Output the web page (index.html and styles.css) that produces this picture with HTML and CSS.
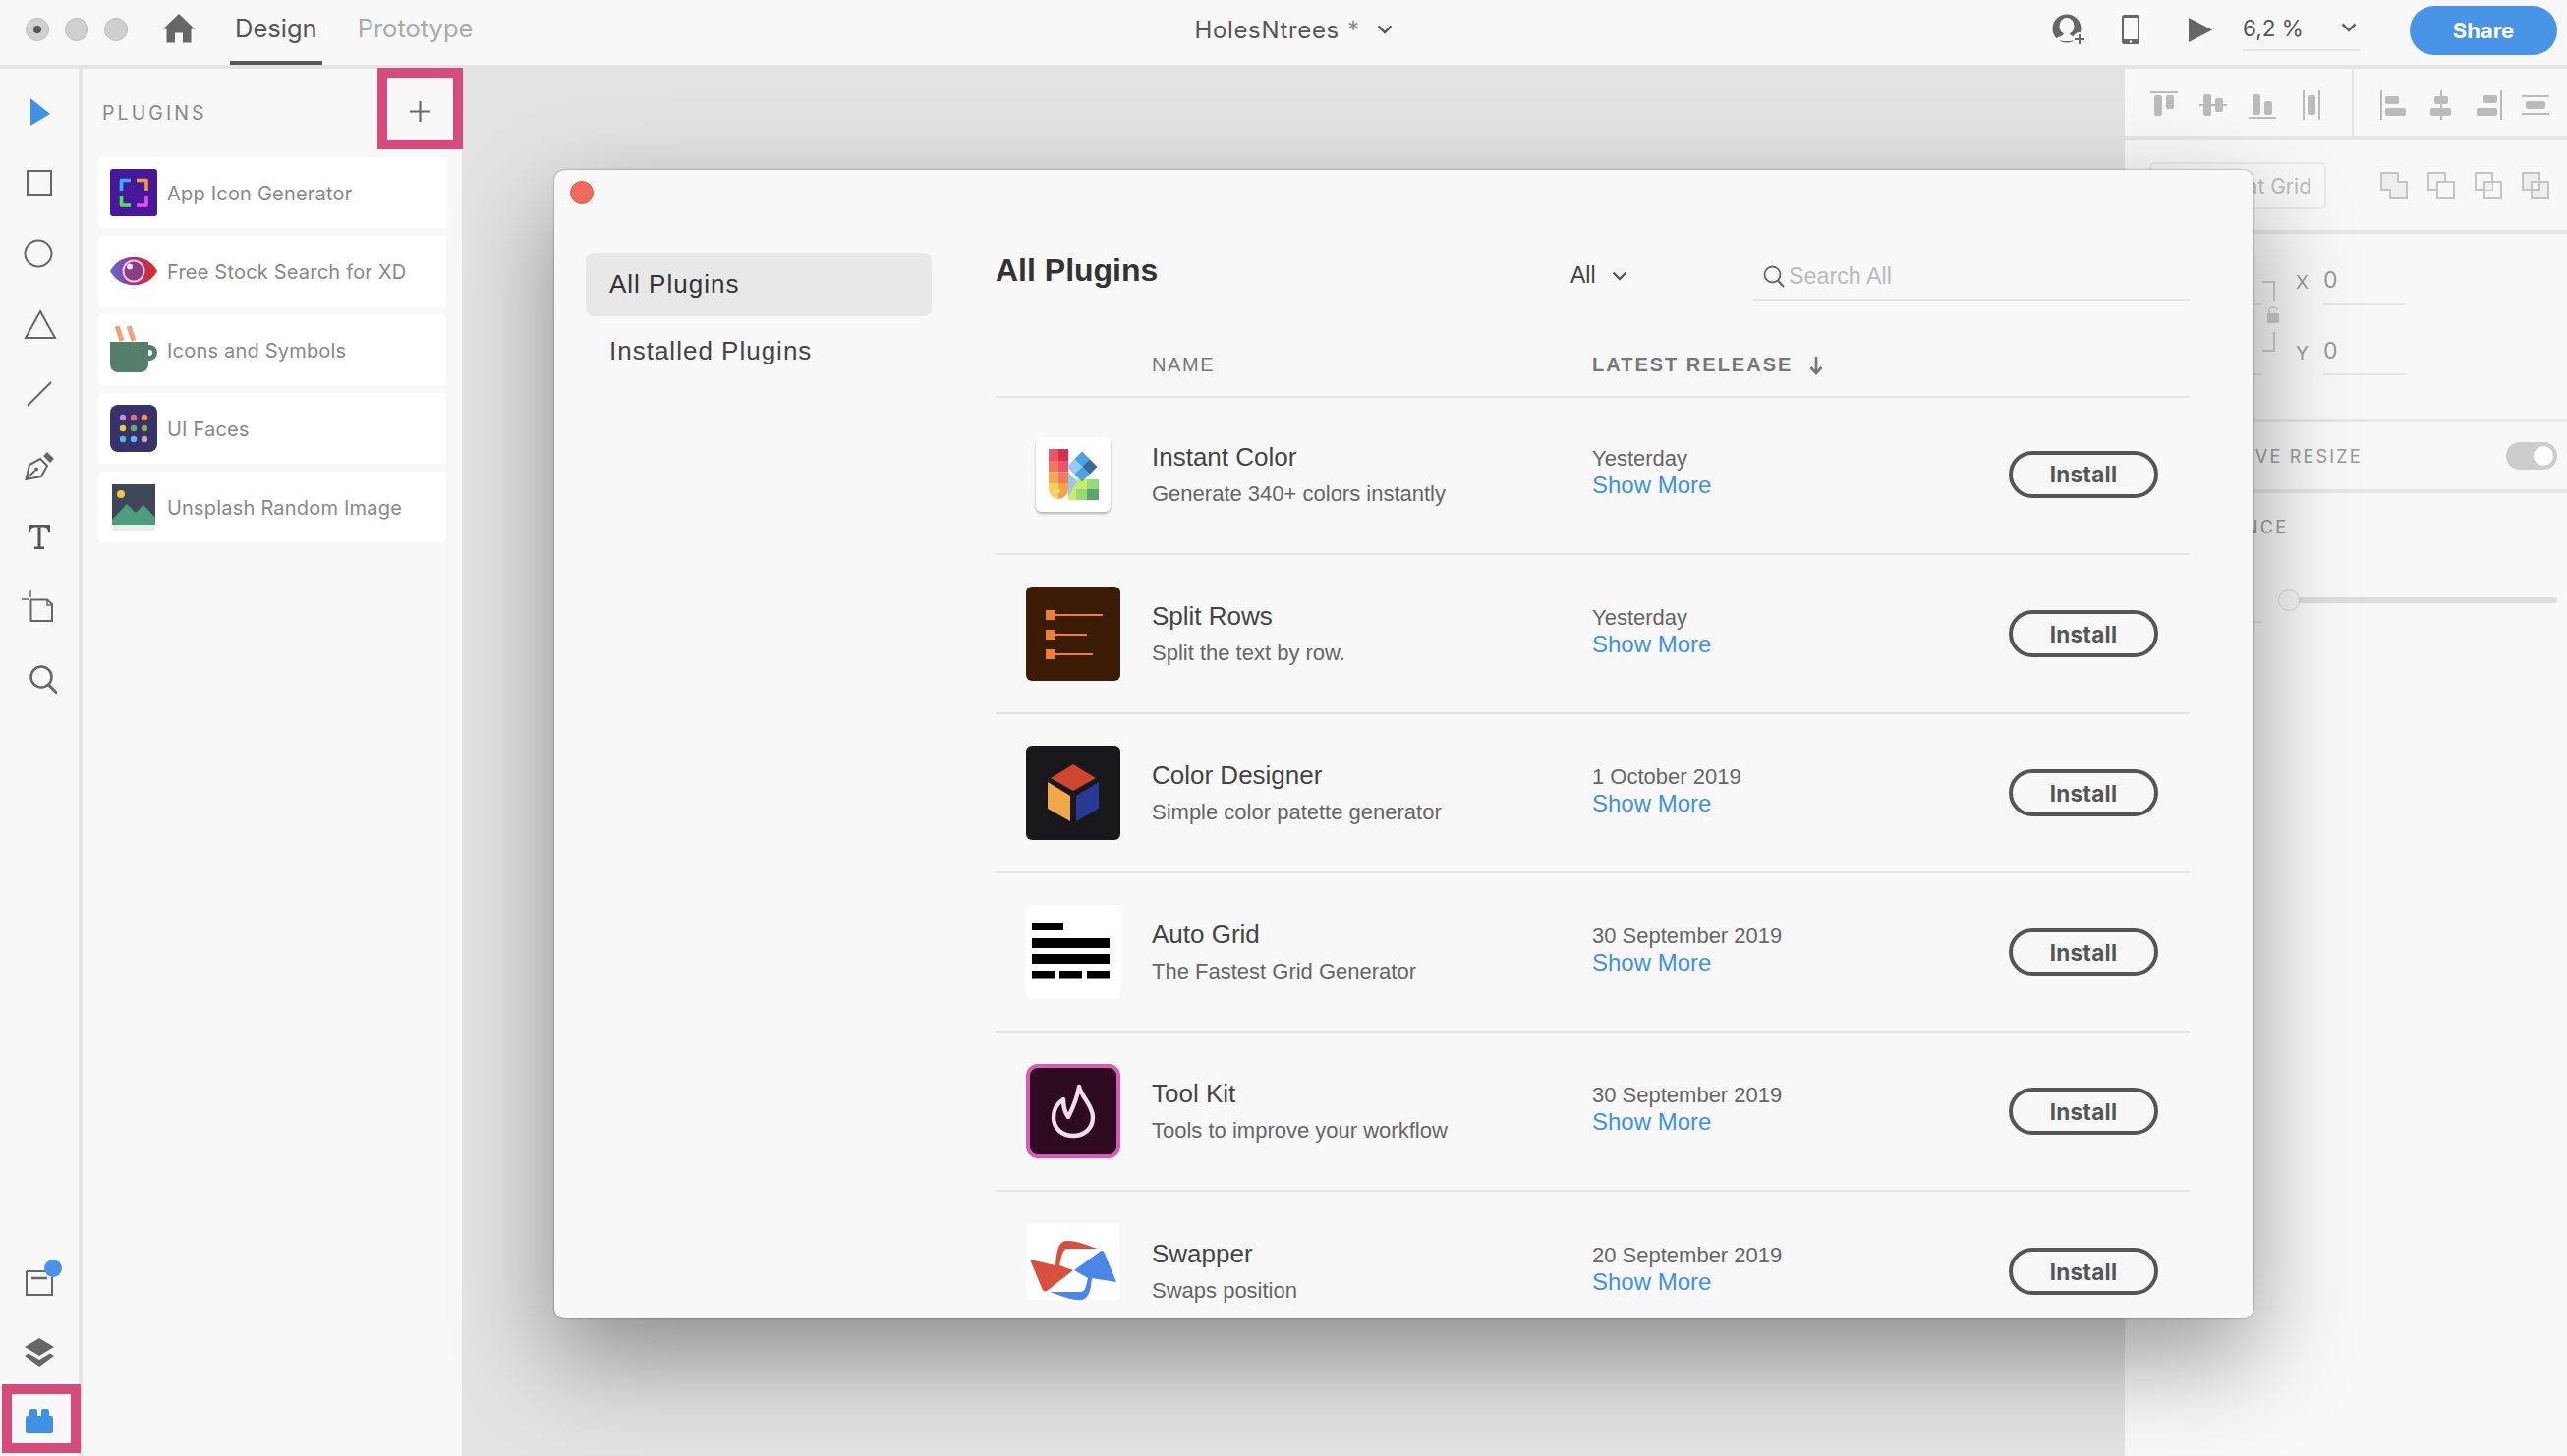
FILE: index.html
```html
<!DOCTYPE html>
<html lang="en">
<head>
<meta charset="utf-8">
<title>HolesNtrees - Adobe XD</title>
<link rel="stylesheet" href="styles.css">
</head>
<body>
<div class="app">
  <header class="topbar">
    <div class="top-left">
      <div class="lights"><span class="light light-on"></span><span class="light"></span><span class="light"></span></div>
      <svg class="home" viewBox="0 0 32 30"><path fill="#666" d="M16 0 32 15.500 28.500 15.500V29.500H20V19.500H12V29.500H3.500V15.500H0Z"/></svg>
      <nav class="tabs"><span class="tab tab-active">Design</span><span class="tab">Prototype</span></nav>
    </div>
    <div class="doc-title"><span>HolesNtrees</span><span class="doc-star">*</span>
      <svg class="chev" viewBox="0 0 16 10"><path d="M1.500 1.500 8 8l6.500-6.500" fill="none" stroke="#555" stroke-width="2.400"/></svg>
    </div>
    <div class="top-right">
      <svg class="ic-person" viewBox="0 0 34 32"><circle cx="15" cy="15" r="14.500" fill="#666"/><ellipse cx="15" cy="12.500" rx="7.500" ry="8.500" fill="#f8f8f8"/><path fill="#f8f8f8" d="M4 25.500C7 23 11 23.500 12 20H18C19 23.500 23 23 26 25.500 23 27.500 19 28 15 28 11 28 7 27.500 4 25.500Z"/><circle cx="28" cy="26" r="7" fill="#f8f8f8"/><path d="M28 21v10M23 26h10" stroke="#666" stroke-width="2" fill="none"/></svg>
      <svg class="ic-phone" viewBox="0 0 18 30"><rect width="18" height="30" rx="2.500" fill="#666"/><rect x="2" y="3" width="14" height="22" fill="#f8f8f8"/><circle cx="9" cy="27.500" r="1.200" fill="#f8f8f8"/></svg>
      <svg class="ic-play" viewBox="0 0 24 25"><path fill="#666" d="M0 0 24 12.500 0 25Z"/></svg>
      <div class="zoom-select"><span>6,2 %</span>
        <svg class="chev" viewBox="0 0 16 10"><path d="M1.500 1.500 8 8l6.500-6.500" fill="none" stroke="#666" stroke-width="2.600"/></svg>
      </div>
      <button class="share">Share</button>
    </div>
  </header>

  <main class="workspace">
    <aside class="toolbar">
      <div class="tools">
        <svg class="tool t-select" viewBox="0 0 20 28"><path fill="#3f92e3" d="M0 0 20 16 0 28Z"/></svg>
        <svg class="tool t-rect" viewBox="0 0 26 26"><rect x="1" y="1" width="24" height="24" fill="none" stroke="#666" stroke-width="2"/></svg>
        <svg class="tool t-circle" viewBox="0 0 30 30"><circle cx="15" cy="15" r="13.500" fill="none" stroke="#666" stroke-width="2"/></svg>
        <svg class="tool t-tri" viewBox="0 0 34 30"><path d="M17 2 32 29H2Z" fill="none" stroke="#666" stroke-width="2"/></svg>
        <svg class="tool t-line" viewBox="0 0 26 26"><path d="M1 25 25 1" stroke="#666" stroke-width="2" fill="none"/></svg>
        <svg class="tool t-pen" viewBox="0 0 30 30"><path d="M1.500 28 5 13l11-6 7 7-6 11Zm0 0 9-9" fill="none" stroke="#666" stroke-width="2"/><circle cx="12" cy="17.500" r="2" fill="#666"/><path fill="#666" d="M19 4l4-4 7 7-4 4Z"/></svg>
        <svg class="tool t-text" viewBox="0 0 22 25"><path fill="#555" d="M0 0H22V7H20C19.500 3.500 18 2.500 14.500 2.500H12.500V22.500H16V25H6V22.500H9.500V2.500H7.500C4 2.500 2.500 3.500 2 7H0Z"/></svg>
        <svg class="tool t-board" viewBox="0 0 32 32"><path d="M9 9.500H26L31 14V31H9.500V10" fill="none" stroke="#666" stroke-width="2"/><path d="M26 9v6h5" fill="none" stroke="#666" stroke-width="1.500"/><path d="M0 9h7M9 0v7" stroke="#666" stroke-width="1.500"/></svg>
        <svg class="tool t-search" viewBox="0 0 28 29"><circle cx="12" cy="12" r="10.500" fill="none" stroke="#666" stroke-width="2.500"/><path d="M19.500 20 27 27.500" stroke="#666" stroke-width="3" stroke-linecap="round"/></svg>
      </div>
      <div class="tools-bottom">
        <div class="assets-wrap">
          <svg class="t-assets" viewBox="0 0 28 26"><path d="M1 1H28M1 1V25H27V7" fill="none" stroke="#666" stroke-width="2" /><path d="M6 8H22" stroke="#666" stroke-width="2.500"/></svg>
          <span class="badge"></span>
        </div>
        <svg class="t-layers" viewBox="0 0 30 29"><path fill="#666" d="M15 0 30 9 15 18 0 9Z"/><path fill="#666" d="M4 15.500 15 22 26 15.500 30 18 15 29 0 18Z"/></svg>
        <div class="plugin-tool">
          <svg class="t-lego" viewBox="0 0 28 25"><path fill="#3f92e3" d="M4 2a2 2 0 0 1 2-2h4a2 2 0 0 1 2 2v5h4V2a2 2 0 0 1 2-2h4a2 2 0 0 1 2 2v5h2a2 2 0 0 1 2 2v14a2 2 0 0 1-2 2H2a2 2 0 0 1-2-2V9a2 2 0 0 1 2-2h2Z"/></svg>
        </div>
      </div>
    </aside>

    <section class="plugins">
      <div class="plugins-head">
        <span class="plugins-title">PLUGINS</span>
        <div class="add-box"><svg class="plus" viewBox="0 0 22 22"><path d="M11 0v22M0 11h22" stroke="#666" stroke-width="2.200"/></svg></div>
      </div>
      <ul class="plugin-list">
        <li class="plugin-item">
          <svg class="plugin-icon" viewBox="0 0 48 48"><rect width="48" height="48" rx="3" fill="#46189a"/><g fill="none" stroke-width="3.600" stroke-linejoin="round"><path d="M11.500 22V11.500H21" stroke="#36b4f2"/><path d="M27 11.500H37V22" stroke="#f3a033"/><path d="M11.500 27V37H21" stroke="#53e05f"/><path d="M27 37H37V27" stroke="#e54ff0"/></g></svg>
          <span>App Icon Generator</span>
        </li>
        <li class="plugin-item">
          <svg class="plugin-icon" viewBox="0 0 48 48"><defs><linearGradient id="eye" x1="0" x2="1" y1="0" y2="0"><stop offset="0" stop-color="#5b6bdc"/><stop offset=".5" stop-color="#a4337e"/><stop offset="1" stop-color="#e52a20"/></linearGradient></defs><path fill="url(#eye)" d="M0 24C10 5 38 5 48 24 38 43 10 43 0 24Z"/><circle cx="24" cy="24" r="10.500" fill="#8d3d86" stroke="#ecc9e2" stroke-width="2"/><circle cx="20" cy="19.500" r="3" fill="#f6e3ef"/></svg>
          <span>Free Stock Search for XD</span>
        </li>
        <li class="plugin-item">
          <svg class="plugin-icon" viewBox="0 0 48 48"><path d="M7 0l5 15M19 0l5 15" stroke="#eda27a" stroke-width="5" fill="none"/><path fill="#54806b" d="M0 16H39V39a8 8 0 0 1-8 8H8a8 8 0 0 1-8-8Z"/><circle cx="40" cy="27" r="5.500" fill="none" stroke="#54806b" stroke-width="5"/></svg>
          <span>Icons and Symbols</span>
        </li>
        <li class="plugin-item">
          <svg class="plugin-icon" viewBox="0 0 48 48"><rect width="48" height="48" rx="8" fill="#39326a"/><circle cx="13" cy="13" r="3.200" fill="#c090e0"/><circle cx="24" cy="13" r="3.200" fill="#e06a8f"/><circle cx="35" cy="13" r="3.200" fill="#ef9a3c"/><circle cx="13" cy="24" r="3.200" fill="#f2c83e"/><circle cx="24" cy="24" r="3.200" fill="#5cb168"/><circle cx="35" cy="24" r="3.200" fill="#8aad50"/><circle cx="13" cy="35" r="3.200" fill="#45bde0"/><circle cx="24" cy="35" r="3.200" fill="#61b6e8"/><circle cx="35" cy="35" r="3.200" fill="#c9a4b4"/></svg>
          <span>UI Faces</span>
        </li>
        <li class="plugin-item">
          <svg class="plugin-icon" viewBox="0 0 48 48"><rect x="2" y="42" width="44" height="6" fill="#e6efec"/><rect x="2" y="1" width="44" height="41" fill="#3e4658"/><circle cx="11" cy="11" r="4" fill="#f2c83e"/><path fill="#4c9e7d" d="M2 37 17 21l9 9 8-8 12 13V42H2Z"/></svg>
          <span>Unsplash Random Image</span>
        </li>
      </ul>
    </section>

    <div class="canvas"></div>

    <aside class="inspector">
      <div class="insp-aligns">
        <div class="align-group align-a">
          <svg class="al" viewBox="0 0 28 28"><path d="M0 1H28" stroke="#bbb" stroke-width="2"/><rect x="4" y="4" width="8" height="21" rx="2" fill="#bbb"/><rect x="16" y="4" width="8" height="14" rx="2" fill="#bbb"/></svg>
          <svg class="al" viewBox="0 0 28 28"><path d="M0 14H28" stroke="#bbb" stroke-width="2"/><rect x="4" y="3" width="8" height="22" rx="2" fill="#bbb"/><rect x="16" y="7" width="8" height="14" rx="2" fill="#bbb"/></svg>
          <svg class="al" viewBox="0 0 28 28"><path d="M0 27H28" stroke="#bbb" stroke-width="2"/><rect x="4" y="3" width="8" height="21" rx="2" fill="#bbb"/><rect x="16" y="10" width="8" height="14" rx="2" fill="#bbb"/></svg>
          <svg class="al" viewBox="0 0 28 30"><path d="M6 0V30M22 0V30" stroke="#bbb" stroke-width="2"/><rect x="10" y="5" width="8" height="20" rx="2" fill="#bbb"/></svg>
        </div>
        <div class="align-group align-b">
          <svg class="al" viewBox="0 0 28 30"><path d="M1 0V30" stroke="#bbb" stroke-width="2"/><rect x="5" y="6" width="14" height="8" rx="2" fill="#bbb"/><rect x="5" y="18" width="21" height="8" rx="2" fill="#bbb"/></svg>
          <svg class="al" viewBox="0 0 28 30"><path d="M14 0V30" stroke="#bbb" stroke-width="2"/><rect x="7" y="6" width="14" height="8" rx="2" fill="#bbb"/><rect x="3" y="18" width="21" height="8" rx="2" fill="#bbb"/></svg>
          <svg class="al" viewBox="0 0 28 30"><path d="M27 0V30" stroke="#bbb" stroke-width="2"/><rect x="9" y="5" width="14" height="8" rx="2" fill="#bbb"/><rect x="2" y="18" width="21" height="8" rx="2" fill="#bbb"/></svg>
          <svg class="al" viewBox="0 0 28 30"><path d="M0 6H28M0 24H28" stroke="#bbb" stroke-width="2"/><rect x="4" y="11" width="20" height="8" rx="2" fill="#bbb"/></svg>
        </div>
      </div>
      <div class="insp-grid">
        <button class="repeat">Repeat Grid</button>
        <div class="bools">
          <svg class="bool" viewBox="0 0 28 28"><path d="M1 1H18V10H27V27H10V18H1Z" fill="#eee" stroke="#c4c4c4" stroke-width="2" stroke-linejoin="round"/></svg>
          <svg class="bool" viewBox="0 0 28 28"><path d="M10 18H1V1H18V10" fill="#f4f4f4" stroke="#c4c4c4" stroke-width="2" stroke-linejoin="round"/><rect x="10" y="10" width="17" height="17" fill="#f8f8f8" stroke="#c4c4c4" stroke-width="2"/></svg>
          <svg class="bool" viewBox="0 0 28 28"><rect x="1" y="1" width="17" height="17" fill="none" stroke="#c4c4c4" stroke-width="2"/><rect x="10" y="10" width="8" height="8" fill="#eee"/><rect x="10" y="10" width="17" height="17" fill="none" stroke="#c4c4c4" stroke-width="2"/></svg>
          <svg class="bool" viewBox="0 0 28 28"><rect x="1" y="1" width="17" height="17" fill="#eee" stroke="#c4c4c4" stroke-width="2"/><rect x="10" y="10" width="17" height="17" fill="#eee" stroke="#c4c4c4" stroke-width="2"/><rect x="10" y="10" width="8" height="8" fill="#f8f8f8" stroke="#c4c4c4" stroke-width="2"/></svg>
        </div>
      </div>
      <div class="insp-pos">
        <div class="pos-size">
          <div class="pos-size-field"></div>
          <div class="pos-size-field"></div>
        </div>
        <div class="pos-lock">
          <svg class="lock-link" viewBox="0 0 18 72"><path d="M0 1H12V20M0 71H12V52" fill="none" stroke="#ccc" stroke-width="2"/><rect x="5" y="33" width="12" height="10" rx="1" fill="#ccc"/><path d="M7 33v-3a4 4 0 0 1 8 0" fill="none" stroke="#ccc" stroke-width="1.500"/></svg>
        </div>
        <div class="pos-fields">
          <div class="pos-field"><span class="pos-label">X</span><span class="pos-value">0</span></div>
          <div class="pos-field"><span class="pos-label">Y</span><span class="pos-value">0</span></div>
        </div>
      </div>
      <div class="insp-resize">
        <span class="insp-caps caps-resize">RESPONSIVE RESIZE</span>
        <span class="toggle"><span class="knob"></span></span>
      </div>
      <div class="insp-appear">
        <span class="insp-caps caps-appear">APPEARANCE</span>
        <div class="slider"><span class="thumb"></span></div>
        <div class="appear-line"></div>
      </div>
    </aside>
  </main>

  <div class="dialog">
    <span class="close-dot"></span>
    <div class="dialog-body">
      <nav class="side">
        <div class="side-item side-active">All Plugins</div>
        <div class="side-item">Installed Plugins</div>
      </nav>
      <div class="content">
        <div class="content-head">
          <h1>All Plugins</h1>
          <div class="filter"><span>All</span><svg class="chev chev-s" viewBox="0 0 16 10"><path d="M1.500 1.500 8 8l6.500-6.500" fill="none" stroke="#555" stroke-width="2.400"/></svg></div>
          <div class="search">
            <svg viewBox="0 0 22 23"><circle cx="9.500" cy="9.500" r="8" fill="none" stroke="#666" stroke-width="1.800"/><path d="M15 15.500 21 22" stroke="#666" stroke-width="2.200"/></svg>
            <span>Search All</span>
          </div>
        </div>
        <div class="table-head">
          <span class="th-name">NAME</span>
          <span class="th-release">LATEST RELEASE<svg viewBox="0 0 14 20"><path d="M7 1V17M1.500 12 7 18l5.500-6" fill="none" stroke="#777" stroke-width="2.600"/></svg></span>
        </div>
        <div class="rows">
          <div class="row row-first">
            <div class="row-icon">
              <div class="card-icon">
                <svg viewBox="0 0 76 76"><path fill="#cdec66" d="M33 63 62 43H36Z"/><rect x="33" y="43" width="31" height="21" rx="1" fill="#cdec66"/><rect x="52" y="43" width="12" height="10" fill="#92dc78"/><rect x="41" y="53" width="11" height="11" fill="#92dc78"/><rect x="52" y="53" width="12" height="11" fill="#5ca56c"/><g transform="rotate(45 47 30)"><rect x="36" y="19" width="11" height="11" fill="#4ba3e3"/><rect x="47" y="19" width="11" height="11" fill="#336b9c"/><rect x="36" y="30" width="11" height="11" fill="#96c9f7"/><rect x="47" y="30" width="11" height="11" fill="#4ba3e3"/></g><path fill="#96c9f7" d="M33 35 42 46 33 60Z"/><path fill="#f8d060" d="M13 47H23V63A10 10 0 0 1 13 53Z"/><path fill="#f5a642" d="M23 47H33V53A10 10 0 0 1 23 63Z"/><rect x="13" y="12" width="10" height="12" fill="#ec5563"/><rect x="23" y="12" width="10" height="12" fill="#d43050"/><rect x="13" y="24" width="10" height="11.500" fill="#f17a5c"/><rect x="23" y="24" width="10" height="11.500" fill="#ec5563"/><rect x="13" y="35.500" width="10" height="11.500" fill="#f6a750"/><rect x="23" y="35.500" width="10" height="11.500" fill="#f17a5c"/><circle cx="23" cy="55" r="1.300" fill="#fff"/></svg>
              </div>
            </div>
            <div class="row-name"><div class="p-title">Instant Color</div><div class="p-sub">Generate 340+ colors instantly</div></div>
            <div class="row-date"><div class="p-date">Yesterday</div><a class="p-more">Show More</a></div>
            <button class="install">Install</button>
          </div>
          <div class="row">
            <div class="row-icon">
              <svg class="big-icon" viewBox="0 0 96 96"><rect width="96" height="96" rx="6" fill="#3a1c06"/><g fill="#f08030"><rect x="20" y="24" width="10" height="10"/><rect x="30" y="28" width="48" height="2"/><rect x="20" y="44" width="10" height="10"/><rect x="30" y="48" width="32" height="2"/><rect x="20" y="64" width="10" height="10"/><rect x="30" y="68" width="38" height="2"/></g></svg>
            </div>
            <div class="row-name"><div class="p-title">Split Rows</div><div class="p-sub">Split the text by row.</div></div>
            <div class="row-date"><div class="p-date">Yesterday</div><a class="p-more">Show More</a></div>
            <button class="install">Install</button>
          </div>
          <div class="row">
            <div class="row-icon">
              <svg class="big-icon" viewBox="0 0 96 96"><rect width="96" height="96" rx="6" fill="#18181a"/><path fill="#cc4630" d="M48 19 71 33 48 46 25 33Z"/><path fill="#efa946" d="M22 37 45 51V77L22 64Z"/><path fill="#283a94" d="M51 51 74 37V64L51 77Z"/></svg>
            </div>
            <div class="row-name"><div class="p-title">Color Designer</div><div class="p-sub">Simple color patette generator</div></div>
            <div class="row-date"><div class="p-date">1 October 2019</div><a class="p-more">Show More</a></div>
            <button class="install">Install</button>
          </div>
          <div class="row">
            <div class="row-icon">
              <svg class="big-icon" viewBox="0 0 96 96"><rect width="96" height="96" rx="6" fill="#fff"/><rect x="6" y="18" width="32" height="8"/><rect x="6" y="34" width="79" height="10"/><rect x="6" y="50" width="79" height="10"/><rect x="6" y="67" width="23" height="7.500"/><rect x="34" y="67" width="23" height="7.500"/><rect x="62" y="67" width="23" height="7.500"/></svg>
            </div>
            <div class="row-name"><div class="p-title">Auto Grid</div><div class="p-sub">The Fastest Grid Generator</div></div>
            <div class="row-date"><div class="p-date">30 September 2019</div><a class="p-more">Show More</a></div>
            <button class="install">Install</button>
          </div>
          <div class="row">
            <div class="row-icon">
              <svg class="big-icon" viewBox="0 0 96 96"><rect x="2" y="2" width="92" height="92" rx="10" fill="#2e0a20" stroke="#d95bb5" stroke-width="4"/><path d="M54 23C56 33 68 42 68 54 68 66 59 73 48 73 37 73 28 66 28 54 28 46 32 40 38 36 38 43 40 50 43 54 46 48 52 36 54 23Z" fill="none" stroke="#f6dcf0" stroke-width="4.400" stroke-linejoin="round"/></svg>
            </div>
            <div class="row-name"><div class="p-title">Tool Kit</div><div class="p-sub">Tools to improve your workflow</div></div>
            <div class="row-date"><div class="p-date">30 September 2019</div><a class="p-more">Show More</a></div>
            <button class="install">Install</button>
          </div>
          <div class="row row-last">
            <div class="row-icon">
              <svg class="swap-icon" viewBox="0 0 94 77"><rect width="94" height="77" fill="#fff"/><path fill="#d94f3d" d="M3 36 29 42C30 30 31 18 40 17 50 16 62 22 72 25H40C36 27 35 33 33 42L47 47 20 68C18 69 16 68 15 65Z"/><path fill="#4a86e8" d="M91 59 66 55C65 65 64 76 55 77 45 78 33 72 23 69H56C60 67 60 62 62 55L48 47 74 28C76 26 78 27 79 30Z"/></svg>
            </div>
            <div class="row-name"><div class="p-title">Swapper</div><div class="p-sub">Swaps position</div></div>
            <div class="row-date"><div class="p-date">20 September 2019</div><a class="p-more">Show More</a></div>
            <button class="install">Install</button>
          </div>
        </div>
      </div>
    </div>
  </div>
</div>
</body>
</html>
```

FILE: styles.css
```css
* { box-sizing: border-box; }
html, body { margin: 0; height: 100%; }
body { font-family: "Inter", "Liberation Sans", sans-serif; background: #f8f8f8; color: #444; overflow: hidden; }
svg { display: block; flex: none; }
ul { list-style: none; margin: 0; padding: 0; }
button { font-family: inherit; cursor: pointer; }

.app { position: relative; width: 2612px; height: 1482px; display: flex; flex-direction: column; }

/* Top bar */
.topbar { height: 70px; flex: none; border-bottom: 4px solid #e4e4e4; display: grid; grid-template-columns: 1fr auto 1fr; align-items: center; background: #f8f8f8; }
.top-left { display: flex; align-items: center; height: 66px; padding-left: 26px; }
.lights { display: flex; gap: 16px; margin-bottom: 6px; }
.light { width: 24px; height: 24px; border-radius: 50%; background: #d0d0d0; border: 1px solid #bdbdbd; display: flex; align-items: center; justify-content: center; }
.light-on::after { content: ""; width: 8px; height: 8px; border-radius: 50%; background: #555; }
.home { width: 32px; height: 30px; margin-left: 36px; margin-bottom: 8px; }
.tabs { display: flex; align-items: stretch; height: 66px; margin-left: 36px; gap: 31px; }
.tab { font-size: 25.500px; color: #aaa; padding: 0 5px; line-height: 58px; }
.tab-active { color: #555; border-bottom: 4px solid #555; }

.doc-title { display: flex; align-items: center; gap: 8px; font-size: 24px; color: #555; letter-spacing: .65px; margin-bottom: 6px; margin-left: 20px; }
.doc-star { color: #888; margin-right: 9px; }
.chev { width: 16px; height: 10px; }

.top-right { display: flex; align-items: center; justify-content: flex-end; height: 66px; padding-right: 10px; }
.ic-person { width: 34px; height: 32px; margin-bottom: 6px; }
.ic-phone { width: 18px; height: 30px; margin: 0 0 6px 37px; }
.ic-play { width: 24px; height: 25px; margin: 0 0 6px 50px; }
.zoom-select { width: 120px; height: 46px; margin-left: 31px; margin-bottom: 8px; border-bottom: 2px solid #e6e6e6; display: flex; align-items: center; justify-content: space-between; padding: 0 4px 0 0; font-size: 22.500px; color: #555; }
.share { width: 150px; height: 50px; margin-left: 50px; margin-bottom: 4px; border: 0; border-radius: 25px; background: #4a94e8; color: #fff; font-size: 22px; font-weight: 700; }

/* Workspace */
.workspace { flex: 1; min-height: 0; display: flex; }
.toolbar { width: 84px; flex: none; border-right: 4px solid #e4e4e4; display: flex; flex-direction: column; justify-content: space-between; position: relative; }
.tools { display: flex; flex-direction: column; align-items: flex-start; }
.tool { display: block; }
.t-select { width: 20px; height: 28px; margin: 30px 0 0 31px; }
.t-rect { width: 26px; height: 26px; margin: 45px 0 0 27px; }
.t-circle { width: 30px; height: 30px; margin: 44px 0 0 24px; }
.t-tri { width: 34px; height: 30px; margin: 42px 0 0 24px; }
.t-line { width: 26px; height: 26px; margin: 43px 0 0 27px; }
.t-pen { width: 30px; height: 30px; margin: 46px 0 0 25px; }
.t-text { width: 22px; height: 25px; margin: 44px 0 0 29px; }
.t-board { width: 32px; height: 32px; margin: 42px 0 0 22px; }
.t-search { width: 28px; height: 29px; margin: 44px 0 0 30px; }
.tools-bottom { display: flex; flex-direction: column; align-items: flex-start; padding-bottom: 3px; }
.assets-wrap { position: relative; margin-left: 26px; }
.t-assets { width: 28px; height: 26px; }
.badge { position: absolute; left: 19px; top: -11px; width: 18px; height: 18px; border-radius: 50%; background: #4a94e8; }
.t-layers { width: 30px; height: 29px; margin: 43px 0 0 25px; }
.plugin-tool { width: 80px; height: 70px; margin: 18px 0 0 2px; border: 10px solid #d74a7c; display: flex; align-items: center; justify-content: center; }
.t-lego { width: 28px; height: 25px; margin-left: -4px; margin-top: 4px; }

.plugins { width: 386px; flex: none; background: #f8f8f8; padding-left: 16px; display: flex; flex-direction: column; }
.plugins-head { height: 90px; display: flex; align-items: center; justify-content: space-between; }
.plugins-title { font-size: 19.500px; letter-spacing: 3.100px; color: #888; padding-left: 4px; margin-bottom: 1px; }
.add-box { width: 87px; height: 83px; margin-right: -1px; margin-top: -1px; align-self: flex-start; border: 10px solid #d74a7c; padding-top: 5px; display: flex; align-items: center; justify-content: center; position: relative; z-index: 1; }
.plus { width: 21px; height: 21px; }
.plugin-list { display: flex; flex-direction: column; gap: 8px; width: 354px; }
.plugin-item { height: 72px; background: #fff; border-radius: 4px; display: flex; align-items: center; padding-left: 12px; gap: 10px; font-size: 20px; color: #888; letter-spacing: .2px; }
.plugin-item span { padding-top: 2px; }
.plugin-icon { width: 48px; height: 48px; }

.canvas { flex: 1; background: #e3e3e3; }

/* Inspector (dimmed behind the dialog) */
.inspector { width: 450px; flex: none; background: #f8f8f8; display: flex; flex-direction: column; color: #999; }
.insp-aligns { height: 72px; border-bottom: 4px solid #e6e6e6; display: flex; }
.align-group { display: flex; align-items: center; padding-top: 5px; }
.align-a { width: 233px; border-right: 2px solid #e6e6e6; padding-left: 26px; gap: 22px; }
.align-b { padding-left: 27px; gap: 20px; }
.al { width: 28px; height: 30px; }
.insp-grid { height: 96px; border-bottom: 4px solid #e6e6e6; display: flex; align-items: center; padding-left: 25px; }
.repeat { width: 180px; height: 48px; background: transparent; border: 2px solid #e8e8e8; border-radius: 6px; color: #bbb; font-size: 21px; text-align: right; padding: 0 13px 0 0; margin-top: 2px; }
.bools { display: flex; gap: 20px; margin-left: 55px; margin-top: 2px; }
.bool { width: 28px; height: 28px; }
.insp-pos { height: 192px; border-bottom: 4px solid #e6e6e6; display: flex; padding: 20px 0 0 40px; }
.pos-size { width: 100px; display: flex; flex-direction: column; gap: 20px; }
.pos-size-field { height: 52px; border-bottom: 2px solid #e6e6e6; }
.pos-lock { width: 34px; padding-top: 28px; }
.lock-link { width: 18px; height: 72px; }
.pos-fields { display: flex; flex-direction: column; gap: 20px; }
.pos-field { width: 112px; height: 52px; display: flex; align-items: center; }
.pos-label { width: 28px; font-size: 19px; color: #999; padding-top: 7px; }
.pos-value { flex: 1; height: 52px; line-height: 54px; font-size: 23px; border-bottom: 2px solid #e6e6e6; }
.insp-resize { height: 72px; border-bottom: 4px solid #e6e6e6; display: flex; align-items: center; justify-content: space-between; padding: 0 10px 0 0; }
.insp-caps { font-size: 18px; letter-spacing: 2.200px; color: #999; white-space: nowrap; line-height: 23px; }
.caps-resize { margin-left: 26px; }
.toggle { width: 52px; height: 28px; border-radius: 14px; background: #cdcdcd; display: flex; align-items: center; justify-content: flex-end; padding-right: 4px; }
.knob { width: 20px; height: 20px; border-radius: 50%; background: #fff; }
.insp-appear { flex: 1; padding: 23px 10px 0 2px; display: flex; flex-direction: column; }
.caps-appear { margin-left: 22px; }
.slider { position: relative; height: 6px; background: #ddd; border-radius: 3px; margin: 60px 0 0 165px; }
.thumb { position: absolute; left: -11px; top: -8px; width: 22px; height: 22px; border-radius: 50%; background: #f6f6f6; border: 1px solid #d8d8d8; }
.appear-line { width: 138px; height: 2px; background: #e6e6e6; margin-top: 18px; }

/* Dialog */
.dialog { position: absolute; left: 564px; top: 173px; width: 1729px; height: 1169px; background: #f8f8f8; border-radius: 10px; box-shadow: 0 0 2px rgba(0,0,0,.55), 0 40px 100px rgba(0,0,0,.38); padding: 0 64px 0 32px; z-index: 5; overflow: hidden; }
.close-dot { position: absolute; left: 16px; top: 11px; width: 24px; height: 24px; border-radius: 50%; background: #f26b5e; border: 1px solid #e25a4e; }
.dialog-body { display: flex; height: 100%; padding-top: 85px; }
.side { width: 352px; flex: none; display: flex; flex-direction: column; gap: 4px; }
.side-item { height: 64px; line-height: 62px; padding-left: 24px; border-radius: 8px; font-family: "Liberation Sans", sans-serif; font-size: 26px; color: #444; letter-spacing: 1px; }
.side-active { background: #e8e8e8; color: #333; }
.content { width: 1215px; margin-left: 65px; display: flex; flex-direction: column; height: 1084px; }
.content-head { height: 47px; display: flex; align-items: flex-start; position: relative; }
.content-head h1 { margin: -1px 0 0; font-family: "Liberation Sans", sans-serif; font-size: 32px; font-weight: 700; color: #333; line-height: 36px; }
.filter { position: absolute; left: 585px; top: 8px; display: flex; align-items: center; gap: 16px; font-family: "Liberation Sans", sans-serif; font-size: 23px; color: #444; line-height: 28px; }
.chev-s { margin-top: 2px; }
.search { position: absolute; right: 0; top: 0; width: 444px; height: 48px; border-bottom: 2px solid #e4e4e4; display: flex; align-items: center; gap: 4px; padding: 1px 0 0 10px; font-family: "Liberation Sans", sans-serif; font-size: 23.300px; color: #bbb; }
.search svg { width: 22px; height: 23px; }
.table-head { height: 100px; border-bottom: 2px solid #e4e4e4; position: relative; display: grid; grid-template-columns: 159px 448px 1fr; align-items: center; font-family: "Liberation Sans", sans-serif; font-size: 20px; color: #777; padding-top: 35px; }
.th-name { grid-column: 2; letter-spacing: 1.600px; }
.th-release { grid-column: 3; letter-spacing: 2px; font-weight: 700; display: flex; align-items: center; gap: 17px; }
.th-release svg { width: 14px; height: 20px; }
.rows { flex: 1; min-height: 0; }
.row { height: 162px; border-bottom: 2px solid #e4e4e4; display: grid; grid-template-columns: 159px 448px 424px 152px; align-items: center; font-family: "Liberation Sans", sans-serif; }
.row-first { height: 160px; padding-bottom: 3px; }
.row-last { border-bottom: 0; }
.row-icon { padding-left: 31px; }
.card-icon { width: 76px; height: 76px; margin-left: 10px; background: #fff; border-radius: 6px; box-shadow: 0 2px 3px rgba(0,0,0,.28); }
.card-icon svg { width: 76px; height: 76px; }
.big-icon { width: 96px; height: 96px; }
.swap-icon { width: 94px; height: 77px; margin: 0 0 19px 1px; }
.p-title { font-size: 26px; color: #444; line-height: 32px; }
.p-sub { font-size: 22px; color: #666; line-height: 28px; margin-top: 8px; }
.row-date { margin-bottom: 4px; }
.p-date { font-size: 22px; color: #666; line-height: 26px; }
.p-more { display: block; font-size: 24px; color: #3f92e3; line-height: 28px; }
.install { width: 152px; height: 48px; background: transparent; border: 4px solid #555; border-radius: 24px; font-size: 22.500px; letter-spacing: .3px; font-weight: 700; color: #555; padding: 0; font-family: "Inter", sans-serif; }
```
